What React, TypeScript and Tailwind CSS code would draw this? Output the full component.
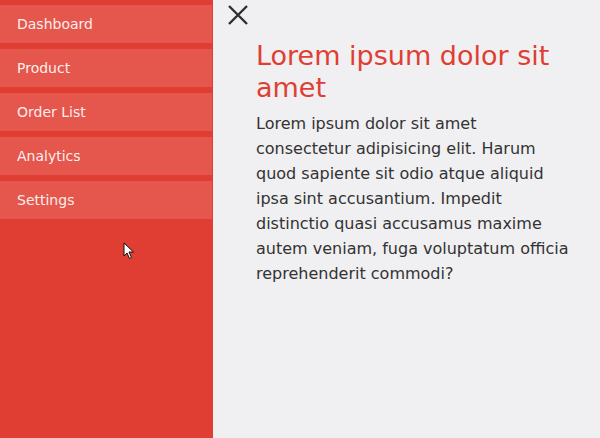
import React from "react";

const items = ["Dashboard", "Product", "Order List", "Analytics", "Settings"];

const lines = [
  "Lorem ipsum dolor sit amet",
  "consectetur adipisicing elit. Harum",
  "quod sapiente sit odio atque aliquid",
  "ipsa sint accusantium. Impedit",
  "distinctio quasi accusamus maxime",
  "autem veniam, fuga voluptatum officia",
  "reprehenderit commodi?",
];

export default function App() {
  return (
    <div
      className="relative flex h-[438px] w-[600px] overflow-hidden bg-[#f0eff1]"
      style={{ fontFamily: '"DejaVu Sans", sans-serif' }}
    >
      <aside className="flex h-full w-[213px] shrink-0 flex-col gap-[6px] bg-[#e03d33] pt-[5px]">
        {items.map((t) => (
          <div
            key={t}
            className="flex h-[38px] w-[212px] items-center bg-[#e5564c] pl-[17px] text-[14px] text-[#fbeeed]"
          >
            {t}
          </div>
        ))}
      </aside>
      <main className="flex flex-1 flex-col pl-[15px]">
        <button className="mt-[5px] flex h-[20px] w-[20px] items-center justify-center">
          <svg width="20" height="20" viewBox="0 0 20 20" fill="none">
            <path d="M1 1 L19 19 M19 1 L1 19" stroke="#2f2f2f" strokeWidth="2.4" />
          </svg>
        </button>
        <div className="pl-[28px]">
          <h1 className="mt-[15px] text-[27px] leading-[32px] text-[#e03e33]">
            Lorem ipsum dolor sit
            <br />
            amet
          </h1>
          <p className="mt-[7px] whitespace-nowrap text-[16px] leading-[25px] text-[#333333]">
            {lines.map((l, i) => (
              <React.Fragment key={i}>
                {l}
                {i < lines.length - 1 && <br />}
              </React.Fragment>
            ))}
          </p>
        </div>
      </main>
      <svg
        className="absolute left-[123px] top-[242px]"
        width="12"
        height="18"
        viewBox="0 0 12 18"
      >
        <path d="M1 1 L1 14 L4 11 L6.5 16.5 L8.5 15.5 L6 10 L10.5 10 Z" fill="#fff" stroke="#111" strokeWidth="1" />
      </svg>
    </div>
  );
}
